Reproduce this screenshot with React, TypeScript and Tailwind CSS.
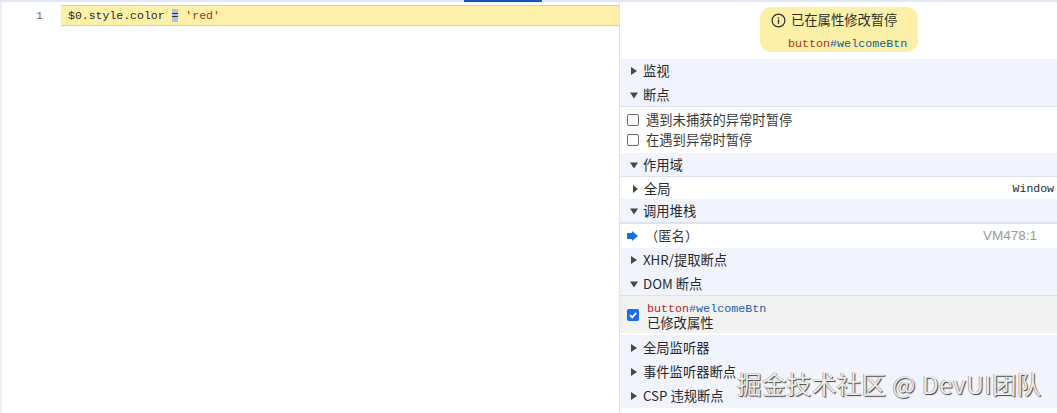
import React from 'react';

const cjk = "font-['Noto_Sans_CJK_SC','Liberation_Sans',sans-serif]";
const mono = "font-['Liberation_Mono','Noto_Sans_CJK_SC',monospace]";

function Arrow({ open }: { open?: boolean }) {
  return (
    <svg width="8" height="8" viewBox="0 0 8 8" className="shrink-0">
      <path d={open ? 'M0 1.5h8L4 7.5z' : 'M1 0v8L7 4z'} fill="#474747" />
    </svg>
  );
}

function Section({ title, open, h, border }: { title: string; open?: boolean; h: string; border?: string }) {
  return (
    <div className={`flex items-center pl-[10px] gap-[5px] bg-[#f1f4fc] text-[13.3px] text-[#2a2a2a] ${h} ${border ?? ''}`}>
      <Arrow open={open} />
      <span>{title}</span>
    </div>
  );
}

function Check({ checked }: { checked?: boolean }) {
  if (checked) {
    return (
      <span className="w-[12px] h-[12px] rounded-[2px] bg-[#1a6ce8] flex items-center justify-center shrink-0">
        <svg width="10" height="10" viewBox="0 0 10 10">
          <path d="M2 5.2 4.2 7.4 8.2 2.8" stroke="#fff" strokeWidth="1.8" fill="none" />
        </svg>
      </span>
    );
  }
  return <span className="w-[12px] h-[12px] rounded-[2px] border border-[#6b6b6b] bg-white shrink-0" />;
}

function Selector({ dark }: { dark?: boolean }) {
  return (
    <span className={`${mono} text-[11.7px] leading-none`}>
      <span className={dark ? 'text-[#a5361c]' : 'text-[#c5221f]'}>button</span>
      <span className={dark ? 'text-[#17608c]' : 'text-[#1a5fb4]'}>#welcomeBtn</span>
    </span>
  );
}

export default function App() {
  return (
    <div className={`relative w-[1057px] h-[413px] bg-white overflow-hidden flex flex-col ${cjk}`}>
      <div className="h-[2px] bg-[#e3e8f6] shrink-0">
        <div className="ml-[464px] w-[78px] h-[2px] bg-[#0b57d0]" />
      </div>

      <div className="flex flex-1 min-h-0">
        <div className="w-[619px] shrink-0 border-l-[2px] border-[#eceffa]">
          <div className="flex mt-[3px]">
            <div className={`w-[59px] h-[21px] pr-[18px] text-right text-[11.5px] leading-[21px] text-[#6f6f6f] ${mono}`}>1</div>
            <div className={`flex-1 h-[21px] pl-[7px] bg-[#fdf0a8] border-y border-[#f3d54e] text-[11.5px] leading-[19px] text-[#2b2b2b] ${mono}`}>
              $0.style.color <span className="bg-[#a9c4ea]">=</span>{' '}
              <span className="text-[#a5361c]">'red'</span>
            </div>
          </div>
        </div>

        <div className="w-[438px] border-l border-[#dfe3ef] flex flex-col">
          <div className="h-[57px] shrink-0 flex justify-center pt-[5px] pl-[1px]">
            <div className="w-[158px] h-[45px] rounded-[11px] bg-[#fcf0a9] pt-[3px]">
              <div className="flex items-center pl-[11px] gap-[5px] text-[13.3px] leading-[20px] text-[#2e2e2e]">
                <svg width="15" height="15" viewBox="0 0 15 15" className="shrink-0">
                  <circle cx="7.5" cy="7.5" r="6.4" fill="none" stroke="#2e2e2e" strokeWidth="1.2" />
                  <path d="M7.5 6.6v4.2M7.5 4.2v1.3" stroke="#2e2e2e" strokeWidth="1.4" />
                </svg>
                <span>已在属性修改暂停</span>
              </div>
              <div className="pl-[28px] mt-[1px] leading-[18px]">
                <Selector dark />
              </div>
            </div>
          </div>

          <Section title="监视" h="h-[24px]" />
          <Section title="断点" open h="h-[24px]" border="border-b border-[#dfe3ef]" />

          <div className="pt-[2px] pb-[3px] text-[13.3px] text-[#3a3a3a]">
            <div className="flex items-center gap-[7px] pl-[7px] h-[21px]">
              <Check />
              <span>遇到未捕获的异常时暂停</span>
            </div>
            <div className="flex items-center gap-[7px] pl-[7px] h-[20px]">
              <Check />
              <span>在遇到异常时暂停</span>
            </div>
          </div>

          <Section title="作用域" open h="h-[24px]" border="border-b border-[#dfe3ef]" />

          <div className="flex items-center h-[22px] pl-[13px] pr-[3px] pt-[1px] text-[13.3px] text-[#2a2a2a]">
            <svg width="6" height="8" viewBox="0 0 6 8" className="shrink-0">
              <path d="M0 0v8L5 4z" fill="#474747" />
            </svg>
            <span className="ml-[5px]">全局</span>
            <span className={`ml-auto text-[11.5px] ${mono}`}>Window</span>
          </div>

          <Section title="调用堆栈" open h="h-[25px]" border="border-b-[2px] border-[#dfe3ef]" />

          <div className="flex items-center h-[24px] pl-[7px] text-[13.3px] text-[#3a3a3a]">
            <svg width="12" height="10" viewBox="0 0 12 10" className="shrink-0">
              <path d="M0 2h5V0l6 5-6 5V8H0z" fill="#1a6ce8" />
            </svg>
            <span className="ml-[6px]">（匿名）</span>
            <span className="ml-auto mr-[20px] text-[13.5px] text-[#9a9a9a] font-['Liberation_Sans',sans-serif]">VM478:1</span>
          </div>

          <Section title="XHR/提取断点" h="h-[24px]" border="pb-[1px]" />
          <Section title="DOM 断点" open h="h-[24px]" border="border-b border-[#dfe3ef]" />

          <div className="flex items-center gap-[8px] pl-[7px] pt-[1px] h-[37px] bg-[#f2f2f2]">
            <Check checked />
            <div className="flex flex-col">
              <div className="leading-[13px]">
                <Selector />
              </div>
              <span className="text-[13.3px] leading-[16px] text-[#2a2a2a]">已修改属性</span>
            </div>
          </div>
          <div className="h-[2px] shrink-0" />

          <Section title="全局监听器" h="h-[25px]" />
          <Section title="事件监听器断点" h="h-[24px]" />
          <Section title="CSP 违规断点" h="h-[24px]" />
        </div>
      </div>

      <div className="absolute left-[737px] top-[367px] text-[24.5px] leading-[34px] tracking-[0.4px] whitespace-nowrap text-[#ececec] [text-shadow:1px_1px_1px_#444,-0.5px_-0.5px_0.5px_#888]">
        掘金技术社区 @ DevUI团队
      </div>
    </div>
  );
}
